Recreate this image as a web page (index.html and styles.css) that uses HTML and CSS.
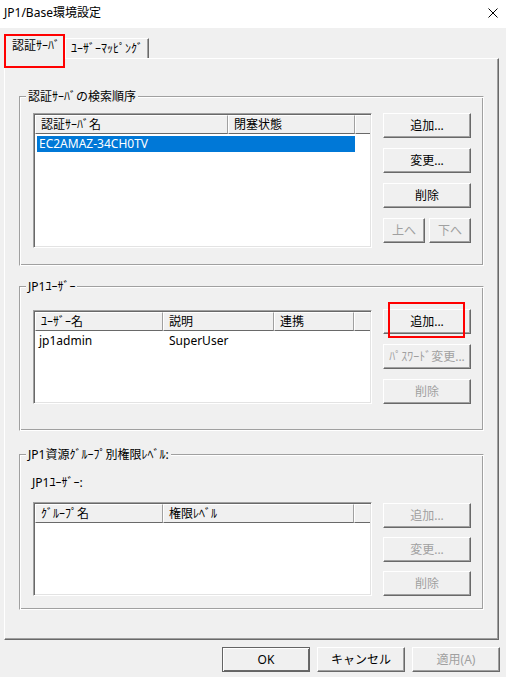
FILE: index.html
```html
<!DOCTYPE html>
<html lang="ja">
<head>
<meta charset="utf-8">
<title>JP1/Base環境設定</title>
<link rel="stylesheet" href="styles.css">
</head>
<body>
<div class="titlebar">
  <span class="title">JP1/Base環境設定</span>
  <svg class="close" width="10" height="10" viewBox="0 0 10 10"><path d="M0.5 0.5L9.5 9.5M9.5 0.5L0.5 9.5" stroke="#000" stroke-width="1" fill="none"/></svg>
</div>
<div class="dialog">
  <div class="tabs">
    <div class="tab active">認証ｻｰﾊﾞ</div>
    <div class="tab">ﾕｰｻﾞｰﾏｯﾋﾟﾝｸﾞ</div>
  </div>
  <div class="panel">
    <section class="group g1">
      <div class="legend">認証ｻｰﾊﾞの検索順序</div>
      <div class="group-body">
        <div class="listview lv1">
          <div class="lv-header">
            <div class="hcell w193">認証ｻｰﾊﾞ名</div>
            <div class="hcell w127">閉塞状態</div>
            <div class="hcell fill"></div>
          </div>
          <div class="lv-body">
            <div class="row selected">
              <div class="cell w191">EC2AMAZ-34CH0TV</div>
              <div class="cell w127"></div>
            </div>
          </div>
        </div>
        <div class="btn-col">
          <button class="btn">追加...</button>
          <button class="btn">変更...</button>
          <button class="btn">削除</button>
          <div class="btn-pair">
            <button class="btn small" disabled>上へ</button>
            <button class="btn small" disabled>下へ</button>
          </div>
        </div>
      </div>
    </section>

    <section class="group g2">
      <div class="legend">JP1ﾕｰｻﾞｰ</div>
      <div class="group-body">
        <div class="listview lv2">
          <div class="lv-header">
            <div class="hcell w128">ﾕｰｻﾞｰ名</div>
            <div class="hcell w111">説明</div>
            <div class="hcell w80">連携</div>
            <div class="hcell fill"></div>
          </div>
          <div class="lv-body">
            <div class="row">
              <div class="cell w126">jp1admin</div>
              <div class="cell w111">SuperUser</div>
              <div class="cell w80"></div>
            </div>
          </div>
        </div>
        <div class="btn-col">
          <button class="btn hl">追加...</button>
          <button class="btn" disabled>ﾊﾟｽﾜｰﾄﾞ変更...</button>
          <button class="btn" disabled>削除</button>
        </div>
      </div>
    </section>

    <section class="group g3">
      <div class="legend">JP1資源ｸﾞﾙｰﾌﾟ別権限ﾚﾍﾞﾙ:</div>
      <div class="sublabel">JP1ﾕｰｻﾞｰ:</div>
      <div class="group-body">
        <div class="listview lv3">
          <div class="lv-header">
            <div class="hcell w128">ｸﾞﾙｰﾌﾟ名</div>
            <div class="hcell w191">権限ﾚﾍﾞﾙ</div>
            <div class="hcell fill"></div>
          </div>
          <div class="lv-body"></div>
        </div>
        <div class="btn-col">
          <button class="btn" disabled>追加...</button>
          <button class="btn" disabled>変更...</button>
          <button class="btn" disabled>削除</button>
        </div>
      </div>
    </section>
  </div>
  <div class="footer">
    <button class="btn default">OK</button>
    <button class="btn">キャンセル</button>
    <button class="btn" disabled>適用(A)</button>
  </div>
</div>
</body>
</html>
```

FILE: styles.css
```css
*, *::before, *::after { box-sizing: border-box; }
html, body { margin: 0; padding: 0; }
body {
  width: 506px;
  height: 677px;
  overflow: hidden;
  background: #f0f0f0;
  font-family: "Noto Sans", "Noto Sans CJK JP", sans-serif;
  font-size: 12px;
  color: #000;
}

.titlebar {
  height: 28px;
  background: #fff;
  display: flex;
  align-items: center;
  justify-content: space-between;
  padding: 0 8px 2px 4px;
}
.title { line-height: 16px; }
.close { display: block; }

.dialog { padding: 7px 0 0 4px; }

.tabs {
  display: flex;
  align-items: flex-end;
  height: 23px;
}
.tab {
  height: 20px;
  width: 84px;
  border: 1px solid;
  border-color: #fff #696969 transparent #fff;
  border-bottom: 0;
  box-shadow: inset -1px 0 0 #a0a0a0;
  padding: 0 0 0 5px;
  line-height: 19px;
  white-space: nowrap;
  background: #f0f0f0;
}
.tab.active {
  position: relative;
  z-index: 1;
  height: 24px;
  width: 61px;
  margin-bottom: -1px;
  padding: 2px 0 0 7px;
  line-height: 15px;
}
.tab.active::after {
  content: "";
  position: absolute;
  left: -1px;
  top: -2px;
  width: 61px;
  height: 34px;
  border: 2px solid #ff0000;
}

.panel {
  width: 495px;
  height: 582px;
  border: 1px solid;
  border-color: #fff #696969 #696969 #fff;
  box-shadow: inset -1px -1px 0 #a0a0a0;
  padding: 37px 0 0 14px;
}

.group {
  width: 465px;
  border: 1px solid;
  border-color: #a0a0a0 #fff #fff #a0a0a0;
  box-shadow: inset 1px 1px 0 #fff, inset -1px -1px 0 #a0a0a0;
}
.g1 { height: 170px; }
.g2 { height: 145px; margin-top: 20px; }
.g3 { height: 156px; margin-top: 23px; }

.legend {
  width: max-content;
  height: 15px;
  line-height: 15px;
  margin: -8px 0 -7px 6px;
  padding: 0 2px;
  background: #f0f0f0;
  white-space: nowrap;
}
.sublabel {
  margin: 20px 0 0 12px;
  line-height: 15px;
  height: 15px;
}

.group-body {
  display: flex;
  align-items: flex-start;
  gap: 11px;
  padding: 16px 12px 0 13px;
}
.g2 .group-body { padding-top: 23px; }
.g3 .group-body { padding-top: 12px; }

.listview {
  width: 339px;
  background: #fff;
  border: 1px solid;
  border-color: #a0a0a0 #fff #fff #a0a0a0;
  box-shadow: inset 1px 1px 0 #696969, inset -1px -1px 0 #e3e3e3;
  padding: 1px;
}
.lv1 { height: 135px; }
.lv2, .lv3 { height: 94px; }

.lv-header { display: flex; height: 19px; }
.hcell {
  height: 19px;
  background: #f0f0f0;
  border-top: 1px solid #fff;
  border-left: 1px solid #fff;
  border-right: 1px solid #a0a0a0;
  border-bottom: 1px solid #696969;
  padding-left: 5px;
  line-height: 17px;
  white-space: nowrap;
  overflow: hidden;
  flex: none;
}
.hcell.fill { flex: 1; border-right: 0; }

.lv-body { padding-top: 2px; }
.row {
  display: flex;
  height: 16px;
  line-height: 16px;
  margin-left: 2px;
  width: max-content;
}
.row.selected { background: #0078d7; color: #fff; }
.cell { padding-left: 6px; white-space: nowrap; flex: none; }
.cell:first-child { padding-left: 2px; }

.w193 { width: 193px; }
.w191 { width: 191px; }
.w128 { width: 128px; }
.w127 { width: 127px; }
.w126 { width: 126px; }
.w111 { width: 111px; }
.w80 { width: 80px; }

.btn-col {
  display: flex;
  flex-direction: column;
  gap: 10px;
  width: 88px;
  flex: none;
}
.g2 .btn-col { margin-top: -1px; }
.g3 .btn-col { margin-top: 1px; gap: 9px; }
.btn-pair { display: flex; gap: 4px; }

.btn {
  width: 88px;
  height: 25px;
  border: 1px solid;
  border-color: #fff #696969 #696969 #fff;
  box-shadow: inset -1px -1px 0 #a0a0a0;
  background: #f0f0f0;
  font: inherit;
  color: #000;
  padding: 0;
  margin: 0;
  line-height: 21px;
  white-space: nowrap;
}
.btn.small { width: 42px; }
.btn:disabled { color: #a0a0a0; }
.btn.default {
  border-color: #646464;
  box-shadow: inset 1px 1px 0 #fff, inset -1px -1px 0 #696969;
}
.btn.hl { position: relative; }
.btn.hl::after {
  content: "";
  position: absolute;
  left: 4px;
  top: -8px;
  width: 77px;
  height: 36px;
  border: 2px solid #ff0000;
}

.footer {
  display: flex;
  justify-content: flex-end;
  gap: 7px;
  margin-top: 7px;
  padding-right: 6px;
}
```
